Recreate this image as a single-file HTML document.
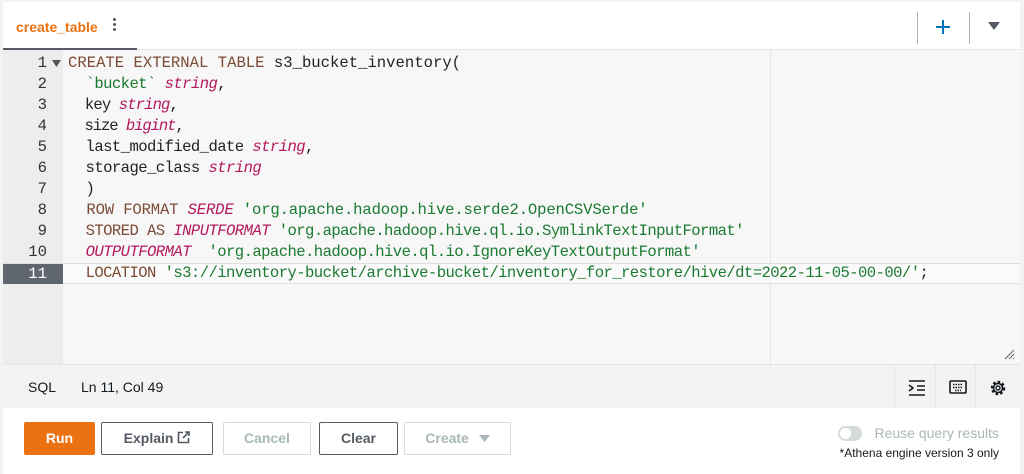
<!DOCTYPE html>
<html><head><style>
*{margin:0;padding:0;box-sizing:border-box}
body{width:1024px;height:474px;background:#f2f3f3;position:relative;overflow:hidden;font-family:"Liberation Sans",sans-serif}
.panel{position:absolute;left:3px;top:2px;width:1017px;height:472px;background:#fff}
.tabbar{position:absolute;left:0;top:0;width:1017px;height:48px;background:#fff;border-bottom:1px solid #e4e6e6}
.tab{position:absolute;left:13px;top:17px;color:#ec7211;font-weight:bold;font-size:14px}
.tabline{position:absolute;left:0;top:46px;width:134px;height:3px;background:#545b64}
.dots{position:absolute;left:110px;top:16px;width:3px}
.dots i{display:block;width:3px;height:3px;border-radius:2px;background:#545b64;margin-bottom:2px}
.vsep{position:absolute;top:10px;width:1px;height:32px;background:#aab7b8}
.editor{position:absolute;left:0;top:48px;width:1017px;height:314px;background:#f7f7f7}
.gutter{position:absolute;left:0;top:0;width:60px;height:314px;background:#ededed}
.margin{position:absolute;left:767px;top:0;width:1px;height:314px;background:#e5e5e5}
.code{position:absolute;left:0;top:3px;font-family:"Liberation Mono",monospace;font-size:15.6px;line-height:21px}
.ln{position:relative;height:21px;white-space:pre}
.num{position:absolute;left:0;width:44px;text-align:right;color:#333}
.txt{position:absolute;left:65px;color:#222;letter-spacing:-0.58px}
.k{color:#7b4b35}.t{color:#b5185e;font-style:italic}.s{color:#1a7a31}
.hl{background:#fafafa;border-top:1px solid #e0e0e0;border-bottom:1px solid #e0e0e0}
.hl .num{background:#5f6670;color:#fff;width:60px;padding-right:16px;height:20px;top:0}
.status{position:absolute;left:0;top:362px;width:1017px;height:44px;background:#f2f3f3;border-top:1px solid #e4e6e6}
.status span{position:absolute;top:14px;font-size:14px;color:#16191f}
.btn{position:absolute;top:420px;height:33px;border:1px solid #545b64;border-radius:2px;background:#fff;font-weight:bold;font-size:14px;color:#545b64;text-align:center;line-height:31px}
.dis{border-color:#d5dbdb;color:#aab7b8}
</style></head><body>
<div class="panel">
 <div class="tabbar">
  <div class="tab">create_table</div>
  <div class="dots"><i></i><i></i><i></i></div>
  <div class="tabline"></div>
  <div class="vsep" style="left:914px"></div>
  <div class="vsep" style="left:966px"></div>
  <svg style="position:absolute;left:932px;top:17px" width="16" height="16"><path d="M8 1V15M1 8H15" stroke="#0073bb" stroke-width="2"/></svg>
  <svg style="position:absolute;left:985px;top:20px" width="12" height="9"><path d="M0 0H12L6 8Z" fill="#545b64"/></svg>
 </div>
 <div class="editor">
  <div class="gutter"></div>
  <div class="margin"></div>
  <div class="code">
   <div class="ln"><span class="num">1</span><svg style="position:absolute;left:49px;top:7px" width="9" height="7"><path d="M0 0H9L4.5 7Z" fill="#555"/></svg><span class="txt" style="letter-spacing:0"><span class="k">CREATE EXTERNAL TABLE</span> s3_bucket_inventory(</span></div>
   <div class="ln"><span class="num">2</span><span class="txt">  <span class="s">`bucket`</span> <span class="t">string</span>,</span></div>
   <div class="ln"><span class="num">3</span><span class="txt" style="letter-spacing:-0.9px">  key <span class="t">string</span>,</span></div>
   <div class="ln"><span class="num">4</span><span class="txt" style="letter-spacing:-1.1px">  size <span class="t">bigint</span>,</span></div>
   <div class="ln"><span class="num">5</span><span class="txt">  last_modified_date <span class="t">string</span>,</span></div>
   <div class="ln"><span class="num">6</span><span class="txt">  storage_class <span class="t">string</span></span></div>
   <div class="ln"><span class="num">7</span><span class="txt">  )</span></div>
   <div class="ln"><span class="num">8</span><span class="txt" style="letter-spacing:-0.16px">  <span class="k">ROW FORMAT</span> <span class="t">SERDE</span> <span class="s">'org.apache.hadoop.hive.serde2.OpenCSVSerde'</span></span></div>
   <div class="ln"><span class="num">9</span><span class="txt">  <span class="k">STORED AS</span> <span class="t">INPUTFORMAT</span> <span class="s">'org.apache.hadoop.hive.ql.io.SymlinkTextInputFormat'</span></span></div>
   <div class="ln"><span class="num">10</span><span class="txt">  <span class="t">OUTPUTFORMAT</span>  <span class="s">'org.apache.hadoop.hive.ql.io.IgnoreKeyTextOutputFormat'</span></span></div>
   <div class="ln hl" style="width:1017px"><span class="num">11</span><span class="txt" style="top:-1px">  <span class="k">LOCATION</span> <span class="s">'s3://inventory-bucket/archive-bucket/inventory_for_restore/hive/dt=2022-11-05-00-00/'</span>;</span></div>
  </div>
  <svg style="position:absolute;left:1000px;top:298px" width="12" height="12"><path d="M11 2L2 11M11 6L6 11M11 10L10 11" stroke="#666" stroke-width="1"/></svg>
 </div>
 <div class="status">
  <span style="left:25px">SQL</span><span style="left:78px">Ln 11, Col 49</span>
  <div style="position:absolute;left:891px;top:0;width:1px;height:43px;background:#e4e6e6"></div>
  <div style="position:absolute;left:932px;top:0;width:1px;height:43px;background:#e4e6e6"></div>
  <div style="position:absolute;left:972px;top:0;width:1px;height:43px;background:#e4e6e6"></div>
  <svg style="position:absolute;left:905px;top:15px" width="18" height="16"><path d="M1 1H17M9 6H17M9 10H17M1 15H17M1 5L5 8L1 11" stroke="#16191f" stroke-width="1.6" fill="none"/></svg>
  <svg style="position:absolute;left:946px;top:15px" width="18" height="14"><rect x="1" y="1" width="16" height="12" rx="1" stroke="#16191f" stroke-width="1.6" fill="none"/><path d="M4 4.5H14M4 7.5H14M6 10.5H12" stroke="#16191f" stroke-width="1.4" stroke-dasharray="1.5 1"/></svg>
  <svg style="position:absolute;left:986px;top:14px" width="18" height="18"><circle cx="9" cy="9" r="6" stroke="#16191f" stroke-width="2.4" fill="none" stroke-dasharray="2.6 2"/><circle cx="9" cy="9" r="4.5" stroke="#16191f" stroke-width="1.6" fill="none"/><circle cx="9" cy="9" r="2" stroke="#16191f" stroke-width="1.4" fill="none"/></svg>
 </div>
 <div class="btn" style="left:21px;width:71px;background:#ec7211;border-color:#ec7211;color:#fff">Run</div>
 <div class="btn" style="left:98px;width:112px">Explain <svg width="13" height="13" style="vertical-align:-1px"><path d="M6 1.5H1.5V11.5H11.5V7M8 1H12V5M12 1L6 7" stroke="#545b64" stroke-width="1.6" fill="none"/></svg></div>
 <div class="btn dis" style="left:220px;width:88px">Cancel</div>
 <div class="btn" style="left:316px;width:79px">Clear</div>
 <div class="btn dis" style="left:401px;width:107px">Create <svg width="11" height="8" style="margin-left:6px"><path d="M0 0H11L5.5 7Z" fill="#aab7b8"/></svg></div>
 <div style="position:absolute;left:835px;top:424px;width:24px;height:15px;border-radius:8px;background:#d5dbdb"><div style="position:absolute;left:2px;top:2px;width:11px;height:11px;border-radius:6px;background:#fff"></div></div>
 <div style="position:absolute;right:21px;top:423px;font-size:14px;color:#aab7b8">Reuse query results</div>
 <div style="position:absolute;right:21px;top:444px;font-size:12px;color:#16191f">*Athena engine version 3 only</div>
</div>
</body></html>
